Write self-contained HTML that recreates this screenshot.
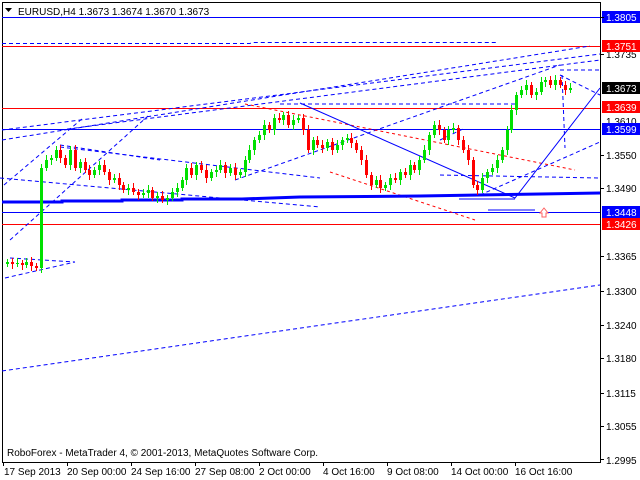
<!DOCTYPE html><html><head><meta charset="utf-8"><style>
html,body{margin:0;padding:0;background:#fff;width:640px;height:480px;overflow:hidden}
svg{display:block;font-family:"Liberation Sans",sans-serif;font-size:10px}
</style></head><body>
<svg id="s" width="640" height="480" viewBox="0 0 640 480" xmlns="http://www.w3.org/2000/svg">
<rect x="0" y="0" width="640" height="480" fill="#fff"/>
<g shape-rendering="crispEdges">
<line x1="2.5" y1="2" x2="2.5" y2="463" stroke="#000"/>
<line x1="2" y1="2.5" x2="600" y2="2.5" stroke="#000"/>
<line x1="600.5" y1="2" x2="600.5" y2="463" stroke="#000"/>
<line x1="2" y1="462.5" x2="601" y2="462.5" stroke="#000"/>
<line x1="2" y1="17.5" x2="600" y2="17.5" stroke="#0000ff"/>
<line x1="2" y1="46.5" x2="600" y2="46.5" stroke="#ff0000"/>
<line x1="2" y1="108.5" x2="600" y2="108.5" stroke="#ff0000"/>
<line x1="2" y1="129.5" x2="600" y2="129.5" stroke="#0000ff"/>
<line x1="2" y1="212.5" x2="600" y2="212.5" stroke="#0000ff"/>
<line x1="2" y1="224.5" x2="600" y2="224.5" stroke="#ff0000"/>
</g>
<g fill="none" stroke="#0000ff" stroke-dasharray="4,3">
<polyline points="2,43.5 250,43.5 252,42.5 498,42.5"/>
<line x1="2" y1="140" x2="590" y2="46"/>
<line x1="2" y1="130" x2="600" y2="54"/>
<line x1="60" y1="130" x2="600" y2="60"/>
<line x1="2" y1="371" x2="600" y2="285"/>
<line x1="4" y1="185" x2="83" y2="118"/>
<line x1="10" y1="240" x2="148" y2="116"/>
<line x1="60" y1="145" x2="160" y2="160"/>
<line x1="60" y1="147" x2="320" y2="178"/>
<line x1="280" y1="104" x2="515" y2="104"/>
<line x1="235" y1="180" x2="560" y2="65"/>
<line x1="560" y1="70" x2="600" y2="70"/>
<line x1="560" y1="75" x2="600" y2="95"/>
<line x1="562" y1="75" x2="565" y2="148"/>
<line x1="480" y1="195" x2="600" y2="142"/>
<line x1="10" y1="258" x2="75" y2="262"/>
<line x1="5" y1="278" x2="75" y2="262"/>
<line x1="0" y1="178" x2="320" y2="207"/>
<line x1="440" y1="175" x2="600" y2="178"/>
<line x1="440" y1="140" x2="465" y2="128"/>
</g>
<g fill="none" stroke="#ff0000" stroke-dasharray="3,3">
<line x1="245" y1="104" x2="575" y2="170"/>
<line x1="330" y1="172" x2="475" y2="220"/>
</g>
<g fill="none" stroke="#0000ff">
<polyline points="300,103 515,198 600,88"/>
<line x1="459" y1="199" x2="515" y2="199"/>
<line x1="488" y1="210" x2="535" y2="210"/>
<polyline points="2,202 62,202 62,201 122,201 122,200 182,200 182,199 242,199 300,197 420,196 540,194 600,193" stroke-width="3"/>
</g>
<path d="M544,208 l4,5 h-2 v4 h-4 v-4 h-2 z" fill="#fff" stroke="#ff6060"/>
<g id="c" shape-rendering="crispEdges"></g>
<g font-size="10" fill="#000">
<path d="M5,8 h7 l-3.5,4 z" fill="#000"/>
<text x="18" y="15">EURUSD,H4  1.3673 1.3674 1.3670 1.3673</text>
<text x="7" y="456">RoboForex - MetaTrader 4, © 2001-2013, MetaQuotes Software Corp.</text>
</g>
<g fill="#000" font-size="10">
<text x="606" y="58">1.3735</text><text x="606" y="125">1.3610</text><text x="606" y="159">1.3550</text>
<text x="606" y="192">1.3490</text><text x="606" y="260">1.3365</text><text x="606" y="295">1.3300</text>
<text x="606" y="329">1.3240</text><text x="606" y="362">1.3180</text><text x="606" y="397">1.3115</text>
<text x="606" y="430">1.3055</text><text x="606" y="464">1.2995</text>
</g>
<g shape-rendering="crispEdges">
<rect x="602" y="11" width="38" height="12" fill="#0000ff"/><rect x="602" y="40" width="38" height="12" fill="#ff0000"/>
<rect x="602" y="82" width="38" height="12" fill="#000"/><rect x="602" y="101" width="38" height="12" fill="#ff0000"/>
<rect x="602" y="123" width="38" height="12" fill="#0000ff"/><rect x="602" y="206" width="38" height="12" fill="#0000ff"/>
<rect x="602" y="218" width="38" height="12" fill="#ff0000"/>
</g>
<g fill="#fff" font-size="10">
<text x="606" y="21">1.3805</text><text x="606" y="50">1.3751</text><text x="606" y="92">1.3673</text>
<text x="606" y="111">1.3639</text><text x="606" y="133">1.3599</text><text x="606" y="216">1.3448</text><text x="606" y="228">1.3426</text>
</g>
<g stroke="#000" shape-rendering="crispEdges">
<line x1="3.5" y1="463" x2="3.5" y2="466"/><line x1="67.5" y1="463" x2="67.5" y2="466"/><line x1="131.5" y1="463" x2="131.5" y2="466"/>
<line x1="195.5" y1="463" x2="195.5" y2="466"/><line x1="259.5" y1="463" x2="259.5" y2="466"/><line x1="323.5" y1="463" x2="323.5" y2="466"/>
<line x1="387.5" y1="463" x2="387.5" y2="466"/><line x1="451.5" y1="463" x2="451.5" y2="466"/><line x1="515.5" y1="463" x2="515.5" y2="466"/>
<line x1="601" y1="17.5" x2="604" y2="17.5"/><line x1="601" y1="54.5" x2="604" y2="54.5"/><line x1="601" y1="155.5" x2="604" y2="155.5"/><line x1="601" y1="188.5" x2="604" y2="188.5"/><line x1="601" y1="256.5" x2="604" y2="256.5"/><line x1="601" y1="291.5" x2="604" y2="291.5"/><line x1="601" y1="325.5" x2="604" y2="325.5"/><line x1="601" y1="358.5" x2="604" y2="358.5"/><line x1="601" y1="393.5" x2="604" y2="393.5"/><line x1="601" y1="426.5" x2="604" y2="426.5"/><line x1="601" y1="459.5" x2="604" y2="459.5"/>
</g>
<g fill="#000" font-size="10">
<text x="4" y="475">17 Sep 2013</text><text x="67" y="475">20 Sep 00:00</text><text x="131" y="475">24 Sep 16:00</text>
<text x="195" y="475">27 Sep 08:00</text><text x="259" y="475">2 Oct 00:00</text><text x="323" y="475">4 Oct 16:00</text>
<text x="387" y="475">9 Oct 08:00</text><text x="451" y="475">14 Oct 00:00</text><text x="515" y="475">16 Oct 16:00</text>
</g>
</svg>
<script>
(function(){
var cl=[262,264,263,265,262,266,268,168,160,158,150,158,165,150,168,162,170,175,170,165,172,180,178,185,190,188,192,195,193,190,198,196,200,198,192,188,180,168,175,165,170,178,172,170,165,173,168,175,172,160,150,140,135,125,130,118,120,115,125,120,118,130,150,140,145,148,142,150,145,140,138,143,150,160,175,185,180,188,185,178,180,172,175,165,170,160,150,135,125,130,140,130,128,140,150,160,185,190,178,172,168,160,150,130,110,95,90,85,95,92,82,80,85,80,85,90,88];
var g=document.getElementById('c'),h='',x=6,p=264;
for(var i=0;i<cl.length;i++){var c=cl[i],o=p,t=Math.min(o,c),b=Math.max(o,c),hi=t-3-(i%3),lo=b+3+(i%2)*2;
var col=c<o?'#00e000':(c>o?'#ff0000':'#000');if(b-t<1){b=t+1;col='#000';}
h+='<line x1="'+(Math.round(x)+1.5)+'" y1="'+hi+'" x2="'+(Math.round(x)+1.5)+'" y2="'+lo+'" stroke="'+col+'"/>';
h+='<rect x="'+Math.round(x)+'" y="'+t+'" width="3" height="'+(b-t)+'" fill="'+col+'"/>';
p=c;x+=4.85;}
g.innerHTML=h;
})();
</script>
</body></html>
